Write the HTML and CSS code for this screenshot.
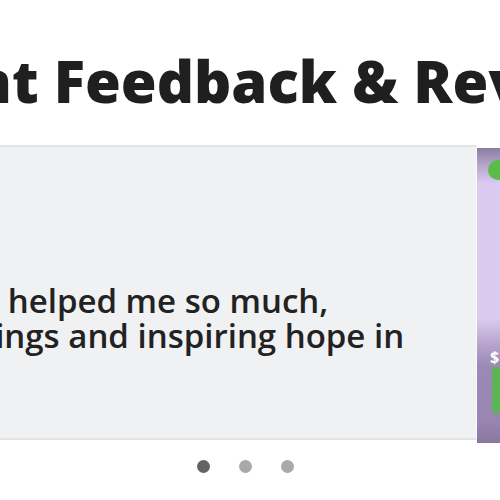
FILE: index.html
```html
<!DOCTYPE html>
<html lang="en">
<head>
  <meta charset="UTF-8">
  <meta name="viewport" content="width=device-width, initial-scale=1.0">
  <title>Client Feedback &amp; Reviews</title>
  <link rel="stylesheet" href="styles.css">
</head>
<body>
  <div class="reviews">
    <h2 class="reviews-title">Client Feedback &amp; Reviews</h2>

    <div class="slider">
      <div class="slide-text">
        <p class="quote">
          <span>has helped me so much,</span><br>
          <span>feelings and inspiring hope in</span>
        </p>
      </div>
      <div class="slide-image">
        <span class="image-dot"></span>
        <span class="image-price">$</span>
        <span class="image-button"></span>
      </div>
    </div>

    <div class="dots">
      <span class="dot active"></span>
      <span class="dot"></span>
      <span class="dot"></span>
    </div>
  </div>
</body>
</html>
```

FILE: styles.css
```css
/* Genel */
* {
  box-sizing: border-box;
  margin: 0;
  padding: 0;
}

body {
  font-family: 'Open Sans', Arial, sans-serif;
  background: #fff;
  color: #222;
  overflow: hidden;
  width: 500px;
  height: 500px;
}

/* Başlık */
.reviews-title {
  font-size: 58px;
  font-weight: 800;
  line-height: 70px;
  margin-top: 46px;
  margin-left: -138px;
  white-space: nowrap;
  color: #1f1f1f;
}

/* Slider */
.slider {
  display: flex;
  margin-top: 29px;
  height: 295px;
}

.slide-text {
  flex: 0 0 477px;
  background: #f0f1f3;
  border-top: 2px solid #e2e3e5;
  border-bottom: 2px solid #e2e3e5;
  border-right: 1px solid #fafafa;
  padding-top: 136px;
}

.quote {
  font-size: 33px;
  font-weight: 600;
  line-height: 35px;
  color: #222;
  white-space: nowrap;
  margin-left: -64px;
  text-indent: 7px;
}

.slide-image {
  flex: 1;
  margin-top: 3px;
  margin-bottom: -3px;
  position: relative;
  background: linear-gradient(to bottom, #8b7da2 0%, #b6a6cc 6%, #dacaf1 12%, #dacaf1 58%, #b8a6cf 66%, #9c88b5 74%, #9a86b2 92%, #8a779f 100%);
  overflow: hidden;
}

.image-dot {
  position: absolute;
  left: 11px;
  top: 12px;
  width: 20px;
  height: 20px;
  border-radius: 50%;
  background: #5cbc4a;
}

.image-price {
  position: absolute;
  left: 13px;
  top: 198px;
  font-size: 16px;
  font-weight: 700;
  color: #fff;
}

.image-button {
  position: absolute;
  left: 15px;
  top: 219px;
  width: 40px;
  height: 46px;
  background: #5bb552;
}

/* Noktalar */
.dots {
  display: flex;
  justify-content: center;
  gap: 29px;
  margin-top: 20px;
  padding-right: 9px;
}

.dot {
  width: 13px;
  height: 13px;
  border-radius: 50%;
  background: #a9a9a9;
}

.dot.active {
  background: #646464;
}
```
